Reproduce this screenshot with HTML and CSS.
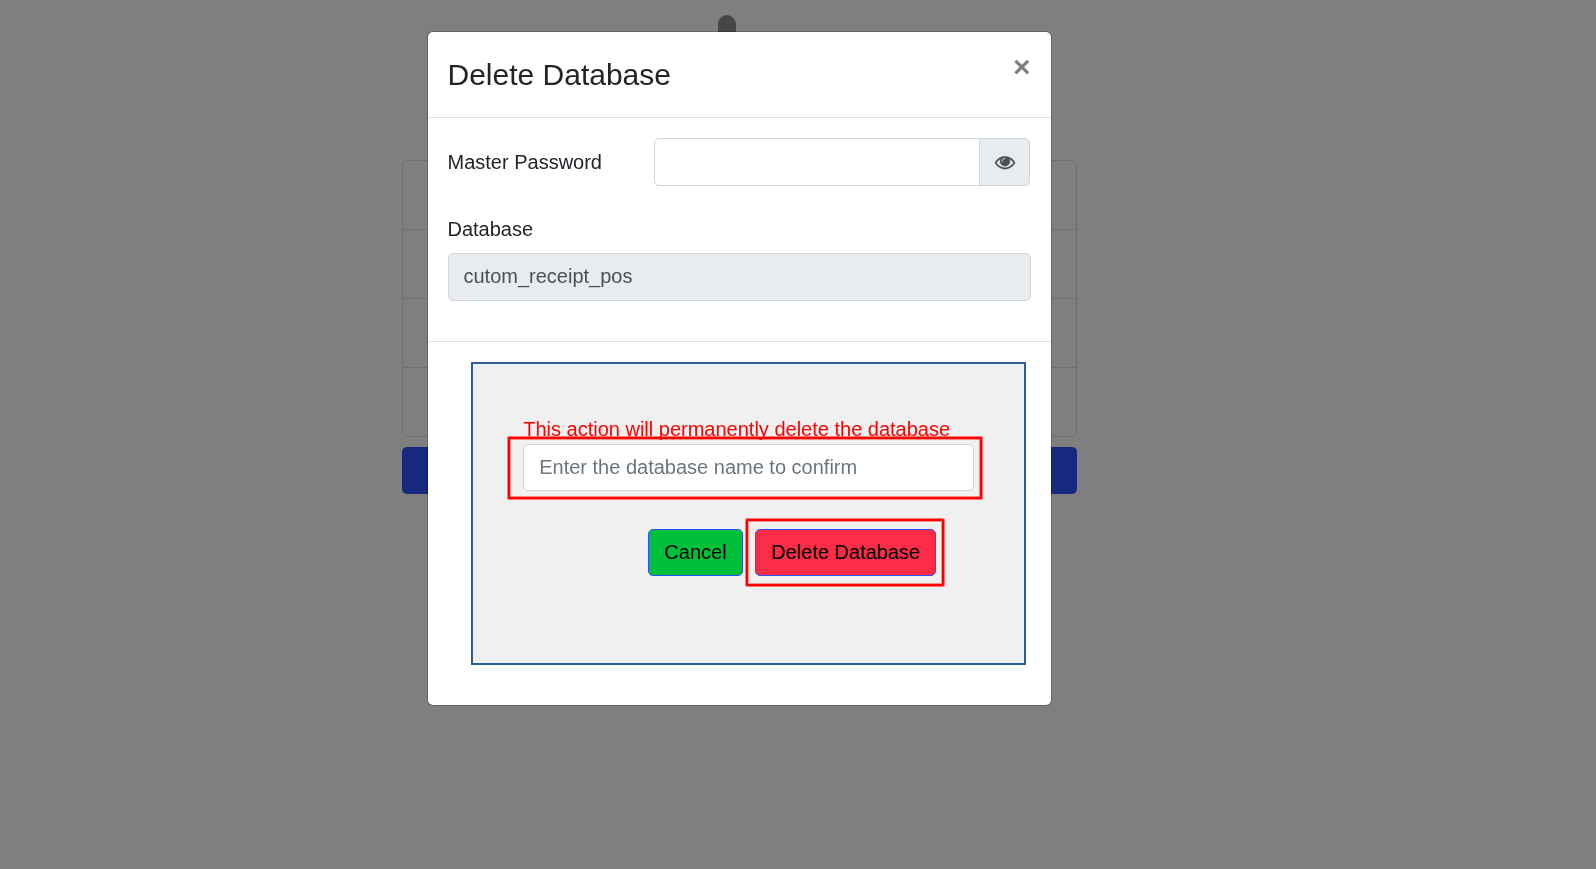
FILE: index.html
```html
<!DOCTYPE html>
<html lang="en">
<head>
<meta charset="utf-8">
<title>Delete Database</title>
<link rel="stylesheet" href="styles.css">
</head>
<body>
<main class="page">
  <div class="logo"></div>
  <div class="list">
    <div class="list-item"></div>
    <div class="list-item"></div>
    <div class="list-item"></div>
    <div class="list-item"></div>
  </div>
  <div class="create"></div>
</main>
<div class="backdrop">
  <section class="modal">
    <header class="modal-header">
      <h4 class="modal-title">Delete Database</h4>
      <button class="close" type="button">×</button>
    </header>
    <div class="modal-body">
      <div class="row">
        <label class="row-label" for="master">Master Password</label>
        <div class="input-group">
          <input class="control group-input" id="master" type="password">
          <span class="addon">
            <svg class="eye" viewBox="0 0 1792 1792"><path d="M1664 960q-152-236-381-353 61 104 61 225 0 185-131.500 316.500t-316.500 131.500-316.500-131.500-131.500-316.500q0-121 61-225-229 117-381 353 133 205 333.500 326.500t434.500 121.500 434.500-121.500 333.500-326.500zm-720-384q0-20-14-34t-34-14q-125 0-214.500 89.500t-89.500 214.500q0 20 14 34t34 14 34-14 14-34q0-86 61-147t147-61q20 0 34-14t14-34zm848 384q0 34-20 69-140 230-376.500 368.500t-499.500 138.500-499.500-139-376.500-368q-20-35-20-69t20-69q140-229 376.500-368t499.500-139 499.500 139 376.500 368q20 35 20 69z"/></svg>
          </span>
        </div>
      </div>
      <label class="db-label" for="db">Database</label>
      <input class="control readonly" id="db" type="text" value="cutom_receipt_pos" readonly>
    </div>
    <footer class="modal-footer">
      <div class="confirm">
        <p class="warning">This action will permanently delete the database</p>
        <div class="confirm-field">
          <input class="control" type="text" placeholder="Enter the database name to confirm">
          <span class="mark mark-field"></span>
        </div>
        <div class="actions">
          <button class="btn btn-cancel" type="button">Cancel</button>
          <div class="delete-wrap">
            <button class="btn btn-delete" type="button">Delete Database</button>
            <span class="mark mark-delete"></span>
          </div>
        </div>
      </div>
    </footer>
  </section>
</div>
</body>
</html>
```
FILE: styles.css
```css
* { box-sizing: border-box; }
body {
  margin: 0;
  height: 869px;
  overflow: hidden;
  background: #fff;
  color: #212529;
  font: 20px/30px "Liberation Sans", Arial, sans-serif;
}
.page { width: 675px; margin-left: 402px; padding-top: 15px; }
.logo {
  width: 17.5px;
  height: 105px;
  margin: 0 0 40px 316.25px;
  border-radius: 9px;
  background: #8f8f8f;
}
.list { border: 1px solid #dfdfdf; border-radius: 5px; }
.list-item { height: 69px; border-bottom: 1px solid #dfdfdf; }
.list-item:last-child { border-bottom: 0; height: 68px; }
.create { height: 47px; margin-top: 10px; border-radius: 5px; background: #2e50fe; }

.backdrop { position: fixed; inset: 0; padding: 31px 0 0 427px; background: rgba(0, 0, 0, .5); }
.modal {
  width: 625px;
  height: 675px;
  border: 1px solid rgba(0, 0, 0, .2);
  border-radius: 6px;
  background: #fff;
  background-clip: padding-box;
}
.modal-header {
  display: flex;
  justify-content: space-between;
  align-items: flex-start;
  height: 86px;
  padding: 20px 20.5px 20px 19.5px;
  border-bottom: 1px solid #dee2e6;
}
.modal-title { margin: 0; font-size: 30px; line-height: 45px; font-weight: 400; }
.close {
  padding: 0;
  border: 0;
  background: none;
  color: #000;
  opacity: .5;
  font: bold 30px/30px "Liberation Sans", Arial, sans-serif;
}
.modal-body { height: 223px; padding: 20px 20px 0 19.5px; }
.row { display: flex; align-items: center; justify-content: space-between; height: 48px; }
.input-group { display: flex; width: 376px; margin-right: 1px; }
.control {
  display: block;
  width: 100%;
  height: 48px;
  margin: 0;
  padding: 0 15px;
  border: 1px solid #ced4da;
  border-radius: 5px;
  outline: 0;
  background: #fff;
  color: #495057;
  font: 20px/30px "Liberation Sans", Arial, sans-serif;
}
.control::placeholder { color: #6c757d; opacity: 1; }
.group-input { flex: 1; width: auto; min-width: 0; border-radius: 5px 0 0 5px; }
.addon {
  display: flex;
  align-items: center;
  justify-content: center;
  width: 51px;
  height: 48px;
  margin-left: -1px;
  border: 1px solid #ced4da;
  border-radius: 0 5px 5px 0;
  background: #e9ecef;
}
.eye { width: 20px; height: 20px; fill: #495057; stroke: #495057; stroke-width: 30; overflow: visible; }
.db-label { display: block; margin: 28px 0 9px; }
.readonly { padding-bottom: 2px; background: #e9ecef; }
.modal-footer { padding: 20px 25px 0 43px; border-top: 1px solid #dee2e6; }
.confirm { height: 303px; padding: 50px 50px 0; border: 2px solid #2a6099; background: #f0f0f0; }
.warning { margin: 0; padding-left: .2px; color: #f00; }
.confirm-field { position: relative; width: 451px; }
.confirm-field .control { height: 47px; padding-left: 15.2px; }
.actions { display: flex; justify-content: flex-end; gap: 12px; margin: 38px 38px 0 0; }
.delete-wrap { position: relative; }
.btn {
  height: 47px;
  padding: 0 15px 2px;
  border: 1px solid #2e50fe;
  border-radius: 5px;
  color: #000;
  font: 20px/30px "Liberation Sans", Arial, sans-serif;
}
.btn-cancel { width: 95px; background: #00bf3b; }
.btn-delete { display: block; width: 181px; background: #ff2c47; }
/* highlight frames drawn over the controls */
.mark {
  position: absolute;
  border: 2px solid #f00;
  border-radius: 1px;
  box-shadow: 0 0 0 1px rgba(255, 0, 0, .5), inset 0 0 0 1px rgba(255, 0, 0, .4);
  pointer-events: none;
}
.mark-field { inset: -7px -8px -8px -15px; }
.mark-delete { inset: -10px -8px -10px -9px; }
```
